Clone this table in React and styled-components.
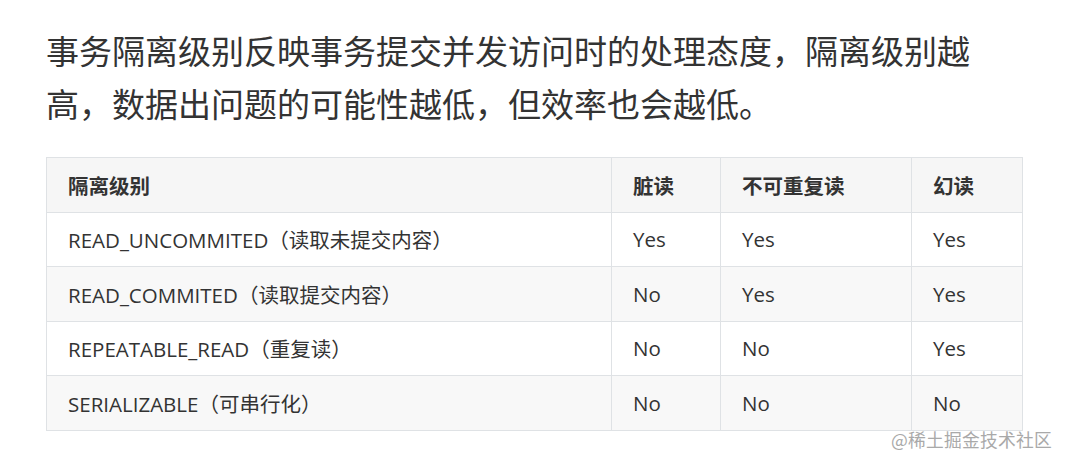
import styled, { createGlobalStyle } from "styled-components";

const GlobalStyle = createGlobalStyle`
  body {
    margin: 0;
    background: #ffffff;
    font-family: "Open Sans", "Noto Sans CJK SC", sans-serif;
  }
`

const Page = styled.div`
  position: relative;
  width: 1067px;
  height: 464px;
  padding: 24px 0 0 46px;
  box-sizing: border-box;
  overflow: hidden;
`

const Paragraph = styled.p`
  margin: 0 0 27px;
  width: 960px;
  font-family: "Noto Sans CJK SC", sans-serif;
  font-size: 33px;
  line-height: 53px;
  color: #333333;
`

const Table = styled.table`
  border-collapse: collapse;
  width: 977px;
  table-layout: fixed;
  font-family: "Open Sans", "Noto Sans CJK SC", sans-serif;
  font-size: 20.5px;
  color: #333333;
`

const Col = styled.col`
  width: ${props => props.w}px;
`

const Row = styled.tr`
  height: 54.5px;
  background: ${props => props.striped ? "#f8f8f8" : "#ffffff"};
`

const HeadCell = styled.th`
  box-sizing: border-box;
  border: 1px solid #dfe2e5;
  padding: 0 21px;
  text-align: left;
  font-weight: 700;
  background: #f6f6f6;
  font-family: "Noto Sans CJK SC", sans-serif;
`

const Cell = styled.td`
  box-sizing: border-box;
  border: 1px solid #dfe2e5;
  padding: 0 21px;
  text-align: left;
  white-space: nowrap;
`

const Watermark = styled.div`
  position: absolute;
  left: 891px;
  top: 426px;
  font-family: "Noto Sans CJK SC", sans-serif;
  font-size: 17.8px;
  color: #a9a9a9;
  letter-spacing: 0.2px;
`

const cols = [
  { title: "隔离级别", w: 565 },
  { title: "脏读", w: 109 },
  { title: "不可重复读", w: 191 },
  { title: "幻读", w: 111 },
]

const rows = [
  ["READ_UNCOMMITED（读取未提交内容）", "Yes", "Yes", "Yes"],
  ["READ_COMMITED（读取提交内容）", "No", "Yes", "Yes"],
  ["REPEATABLE_READ（重复读）", "No", "No", "Yes"],
  ["SERIALIZABLE（可串行化）", "No", "No", "No"],
]

const App = () => {
  return (
    <>
      <GlobalStyle />
      <Page>
        <Paragraph>
          事务隔离级别反映事务提交并发访问时的处理态度，隔离级别越高，数据出问题的可能性越低，但效率也会越低。
        </Paragraph>
        <Table>
          <colgroup>
            {cols.map(c => <Col key={c.title} w={c.w} />)}
          </colgroup>
          <thead>
            <Row>
              {cols.map(c => <HeadCell key={c.title}>{c.title}</HeadCell>)}
            </Row>
          </thead>
          <tbody>
            {rows.map((r, i) => (
              <Row key={r[0]} striped={i % 2 === 1}>
                {r.map((v, j) => <Cell key={j}>{v}</Cell>)}
              </Row>
            ))}
          </tbody>
        </Table>
        <Watermark>@稀土掘金技术社区</Watermark>
      </Page>
    </>
  )
}

export default App
